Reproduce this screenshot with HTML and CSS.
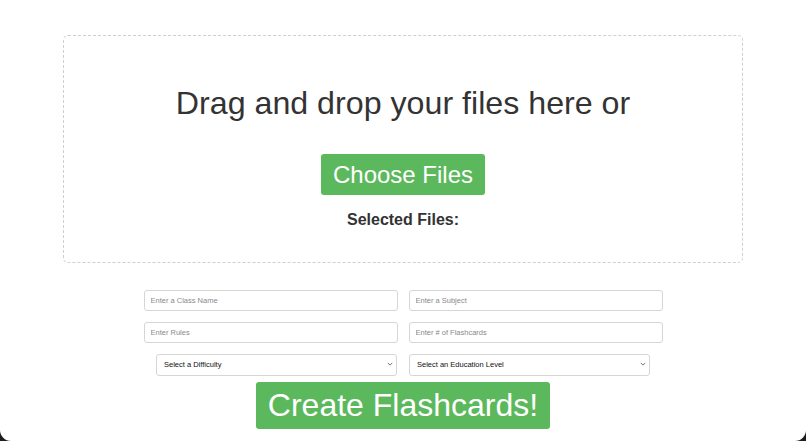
FILE: index.html
```html
<!DOCTYPE html>
<html lang="en">
<head>
<meta charset="utf-8">
<title>Flashcard Generator</title>
<link rel="stylesheet" href="styles.css">
</head>
<body>
<main class="page">
  <section class="dropzone">
    <h1 class="dropzone-title">Drag and drop your files here or</h1>
    <button class="btn btn-choose" type="button">Choose Files</button>
    <h3 class="selected-title">Selected Files:</h3>
  </section>

  <form class="options">
    <div class="row">
      <input class="field" type="text" placeholder="Enter a Class Name">
      <input class="field" type="text" placeholder="Enter a Subject">
    </div>
    <div class="row">
      <input class="field" type="text" placeholder="Enter Rules">
      <input class="field" type="text" placeholder="Enter # of Flashcards">
    </div>
    <div class="row row-selects">
      <div class="select-wrap">
        <select class="select">
          <option>Select a Difficulty</option>
        </select>
        <svg class="chevron" viewBox="0 0 8 5" width="6" height="4"><path d="M1 1l3 3 3-3" fill="none" stroke="#555" stroke-width="1.1"/></svg>
      </div>
      <div class="select-wrap">
        <select class="select">
          <option>Select an Education Level</option>
        </select>
        <svg class="chevron" viewBox="0 0 8 5" width="6" height="4"><path d="M1 1l3 3 3-3" fill="none" stroke="#555" stroke-width="1.1"/></svg>
      </div>
    </div>
    <button class="btn btn-create" type="button">Create Flashcards!</button>
  </form>
</main>
</body>
</html>
```

FILE: styles.css
```css
html {
  background: #1c1c1c;
}

body {
  margin: 0;
  height: 441px;
  background: #fff;
  border-radius: 0 0 11px 11px;
  overflow: hidden;
  font-family: "Liberation Sans", Arial, sans-serif;
  color: #333;
}

.page {
  display: flex;
  flex-direction: column;
  align-items: center;
  padding-top: 35px;
}

.dropzone {
  box-sizing: border-box;
  width: 680px;
  height: 228px;
  border: 1px dashed #cfcfcf;
  border-radius: 5px;
  display: flex;
  flex-direction: column;
  align-items: center;
  padding-top: 49px;
}

.dropzone-title {
  margin: 0;
  font-size: 32.2px;
  font-weight: normal;
  line-height: 37px;
  color: #333;
}

.btn {
  font-family: "Liberation Sans", Arial, sans-serif;
  background: #5cb85c;
  color: #fff;
  border: none;
  border-radius: 3px;
  cursor: pointer;
}

.btn-choose {
  margin-top: 32px;
  font-size: 24px;
  line-height: 27px;
  padding: 7px 12px;
  height: 41px;
}

.selected-title {
  margin: 16px 0 0;
  font-size: 16px;
  line-height: 18px;
  font-weight: bold;
  color: #333;
}

.options {
  margin-top: 27px;
  display: flex;
  flex-direction: column;
  align-items: center;
  width: 520px;
}

.row {
  display: flex;
  justify-content: center;
  gap: 11px;
  margin-bottom: 11px;
}

.field {
  box-sizing: border-box;
  width: 254px;
  height: 21px;
  border: 1px solid #d6d6d6;
  border-radius: 3px;
  padding: 0 6px;
  font-family: "Liberation Sans", Arial, sans-serif;
  font-size: 7.5px;
  color: #333;
  outline: none;
}

.field::placeholder {
  color: #8a8a8a;
}

.row-selects {
  margin-top: -1px;
  margin-bottom: 6px;
  gap: 12px;
}

.select-wrap {
  position: relative;
}

.select {
  box-sizing: border-box;
  width: 241px;
  height: 22px;
  border: 1px solid #d6d6d6;
  border-radius: 3px;
  padding: 0 7px;
  background: #fff;
  font-family: "Liberation Sans", Arial, sans-serif;
  font-size: 7.5px;
  color: #111;
  -webkit-appearance: none;
  appearance: none;
  outline: none;
}

.chevron {
  position: absolute;
  right: 4px;
  top: 9px;
  pointer-events: none;
}

.btn-create {
  font-size: 32px;
  line-height: 37px;
  padding: 5px 12px;
  height: 47px;
}
```
